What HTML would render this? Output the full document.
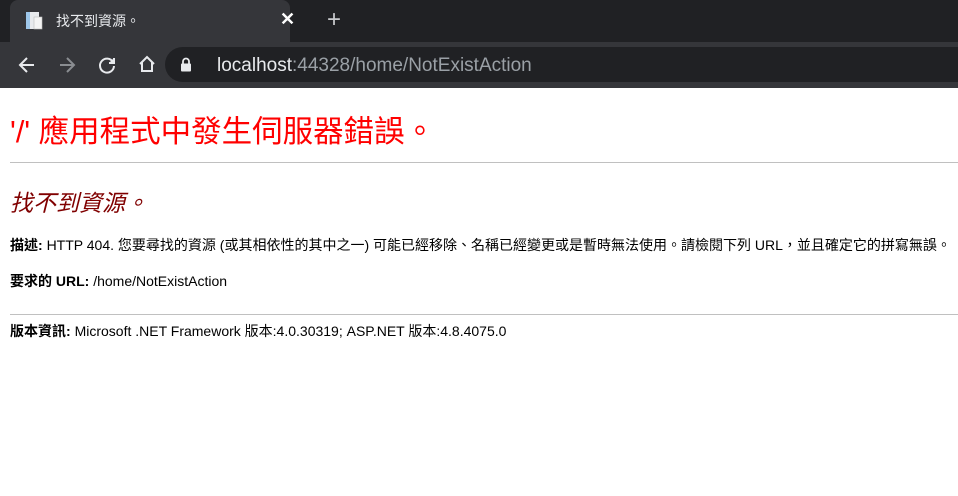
<!DOCTYPE html>
<html><head><meta charset="utf-8"><style>
*{margin:0;padding:0;box-sizing:border-box}
body{width:958px;height:496px;overflow:hidden;background:#fff;font-family:"Liberation Sans","Noto Sans CJK TC",sans-serif;position:relative}
.tabbar{position:absolute;left:0;top:0;width:958px;height:42px;background:#202124}
.tab{position:absolute;left:10px;top:0;width:280px;height:42px;background:#35363a;border-radius:8px 8px 0 0}
.tab .t{position:absolute;left:46px;top:11px;color:#e8eaed;font-size:14px}
.tab .x{position:absolute;left:270px;top:9px;color:#fff;font-size:18px;font-weight:bold}
.plus{position:absolute;left:327px;top:6px;color:#c8cacd;font-size:24px}
.toolbar{position:absolute;left:0;top:42px;width:958px;height:46px;background:#35363a}
.omni{position:absolute;left:165px;top:5px;width:810px;height:35px;background:#202124;border-radius:18px}
.url{position:absolute;left:52px;top:8px;font-size:19px;color:#e8eaed}
.url span{color:#9aa0a6}
.content{position:absolute;left:10px;top:88px;width:948px}
h1{position:absolute;top:19px;font-weight:normal;color:#f00;font-size:30.5px;white-space:nowrap}
hr{position:absolute;left:0;width:948px;border:0;border-top:1px solid #c0c0c0}
h2{position:absolute;top:96px;font-weight:normal;font-style:italic;color:maroon;font-size:23px}
p{position:absolute;font-size:14px;color:#000;white-space:nowrap}
</style></head><body>
<div class="tabbar">
 <div class="tab">
  <svg style="position:absolute;left:14px;top:11px" width="20" height="20" viewBox="0 0 20 20"><rect x="2" y="1" width="5" height="17" fill="#9ec7ea"/><rect x="6" y="1" width="9" height="17" fill="#e8eaed"/><rect x="10" y="6" width="8" height="12" fill="#f4f4f4" stroke="#bbb" stroke-width=".6"/></svg>
  <div class="t">找不到資源。</div>
  <div class="x">✕</div>
 </div>
 <div class="plus">+</div>
</div>
<div class="toolbar">
 <svg style="position:absolute;left:17px;top:13px" width="20" height="20" viewBox="0 0 20 20" fill="none" stroke="#e8eaed" stroke-width="2"><path d="M17 10H4M10 3L3 10l7 7"/></svg>
 <svg style="position:absolute;left:57px;top:13px" width="20" height="20" viewBox="0 0 20 20" fill="none" stroke="#8a8d91" stroke-width="2"><path d="M3 10h13M10 3l7 7-7 7"/></svg>
 <svg style="position:absolute;left:97px;top:13px" width="20" height="20" viewBox="0 0 20 20" fill="none" stroke="#e8eaed" stroke-width="2"><path d="M16 7A7 7 0 1 0 17 11"/><path d="M17 3v5h-5" fill="#e8eaed"/></svg>
 <svg style="position:absolute;left:137px;top:12px" width="20" height="20" viewBox="0 0 20 20" fill="none" stroke="#e8eaed" stroke-width="2"><path d="M3 10L10 3l7 7M5 8v9h10V8"/></svg>
 <div class="omni">
  <svg style="position:absolute;left:15px;top:10px" width="12" height="15" viewBox="0 0 12 15"><path d="M3 7V4.5a3 3 0 0 1 6 0V7" fill="none" stroke="#e8eaed" stroke-width="1.8"/><rect x="1" y="6.5" width="10" height="8" rx="1" fill="#e8eaed"/></svg>
  <div class="url">localhost<span>:44328/home/NotExistAction</span></div>
 </div>
</div>
<div class="content">
 <h1>'/' 應用程式中發生伺服器錯誤。</h1>
 <hr style="top:74px">
 <h2>找不到資源。</h2>
 <p style="top:147px"><b>描述: </b>HTTP 404. 您要尋找的資源 (或其相依性的其中之一) 可能已經移除、名稱已經變更或是暫時無法使用。請檢閱下列 URL，並且確定它的拼寫無誤。</p>
 <p style="top:183px"><b>要求的 URL: </b>/home/NotExistAction</p>
 <hr style="top:226px">
 <p style="top:233px"><b>版本資訊: </b>Microsoft .NET Framework 版本:4.0.30319; ASP.NET 版本:4.8.4075.0</p>
</div>
</body></html>
